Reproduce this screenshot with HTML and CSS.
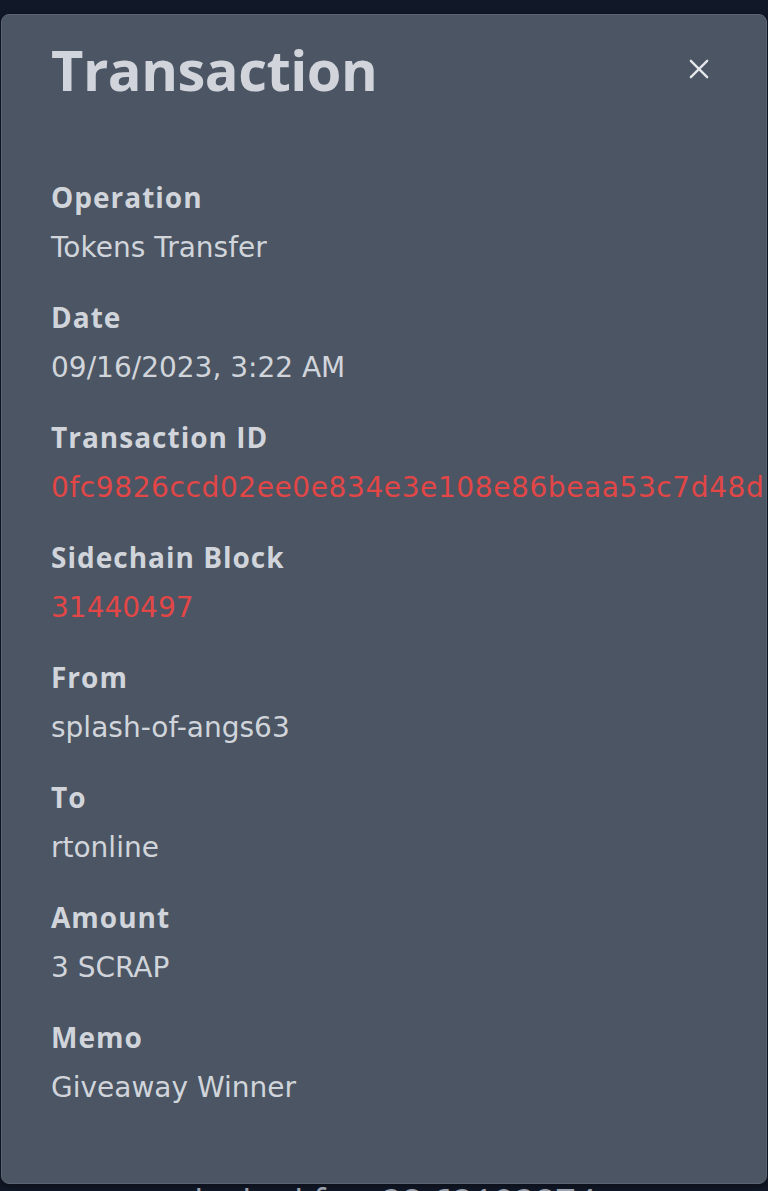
FILE: index.html
```html
<!DOCTYPE html>
<html lang="en">
<head>
    <meta charset="UTF-8">
    <meta name="viewport" content="width=device-width, initial-scale=1.0">
    <title>Transaction</title>
    <link rel="stylesheet" href="styles.css">
</head>
<body>
    <div class="modal">
        <div class="modal-header">
            <h2 class="modal-title">Transaction</h2>
            <button class="close" aria-label="Close">
                <svg width="28" height="28" viewBox="0 0 24 24" fill="none" stroke="currentColor" stroke-width="2" stroke-linecap="round">
                    <path d="M5 5L19 19M19 5L5 19"/>
                </svg>
            </button>
        </div>

        <dl class="details">
            <div class="field">
                <dt>Operation</dt>
                <dd>Tokens Transfer</dd>
            </div>
            <div class="field">
                <dt>Date</dt>
                <dd>09/16/2023, 3:22 AM</dd>
            </div>
            <div class="field">
                <dt>Transaction ID</dt>
                <dd><a href="#" class="link hash">0fc9826ccd02ee0e834e3e108e86beaa53c7d48d</a></dd>
            </div>
            <div class="field">
                <dt>Sidechain Block</dt>
                <dd><a href="#" class="link">31440497</a></dd>
            </div>
            <div class="field">
                <dt>From</dt>
                <dd>splash-of-angs63</dd>
            </div>
            <div class="field">
                <dt>To</dt>
                <dd>rtonline</dd>
            </div>
            <div class="field">
                <dt>Amount</dt>
                <dd>3 SCRAP</dd>
            </div>
            <div class="field">
                <dt>Memo</dt>
                <dd>Giveaway Winner</dd>
            </div>
        </dl>
    </div>

    <!-- row of the list behind the modal -->
    <div class="behind">
        <span>unlocked for</span>
        <span>28.62102874</span>
    </div>
</body>
</html>
```

FILE: styles.css
```css
body {
    font-family: "Open Sans", Lato, sans-serif;
    margin: 0;
    padding: 0;
    background-color: #111827;
    color: #d1d5db;
    overflow: hidden;
    font-variant-ligatures: none;
}
.modal {
    margin: 14px 1px 0 1px;
    padding: 12px 48px 71px 49px;
    background-color: #4b5563;
    border: 1px solid #5b6472;
    border-radius: 8px;
    box-shadow: 0 2px 6px rgba(0, 0, 0, 0.4);
}
.modal-header {
    display: flex;
    justify-content: space-between;
    align-items: center;
    margin-bottom: 62px;
}
.modal-title {
    margin: 0;
    font-size: 56px;
    line-height: 84px;
    font-weight: 700;
    letter-spacing: -0.5px;
    color: #d1d5db;
}
.close {
    background: none;
    border: none;
    padding: 0;
    margin-right: 5px;
    color: #e5e7eb;
    cursor: pointer;
    display: flex;
}
.details {
    margin: 0;
}
.field {
    margin-bottom: 21px;
}
.field:last-child {
    margin-bottom: 0;
}
dt {
    font-size: 28px;
    line-height: 48px;
    font-weight: 700;
    letter-spacing: 1px;
    color: #d1d5db;
}
dd {
    margin: 0;
    padding-top: 3px;
    font-family: "DejaVu Sans", "Open Sans", sans-serif;
    font-size: 28px;
    line-height: 48px;
    color: #d1d5db;
    white-space: nowrap;
}
.link {
    color: #e24646;
    text-decoration: none;
}
.hash {
    letter-spacing: 0.6px;
}
.behind {
    display: flex;
    gap: 20px;
    padding: 0 0 0 150px;
    font-size: 36px;
    line-height: 36px;
    color: #9ca3af;
}
```
